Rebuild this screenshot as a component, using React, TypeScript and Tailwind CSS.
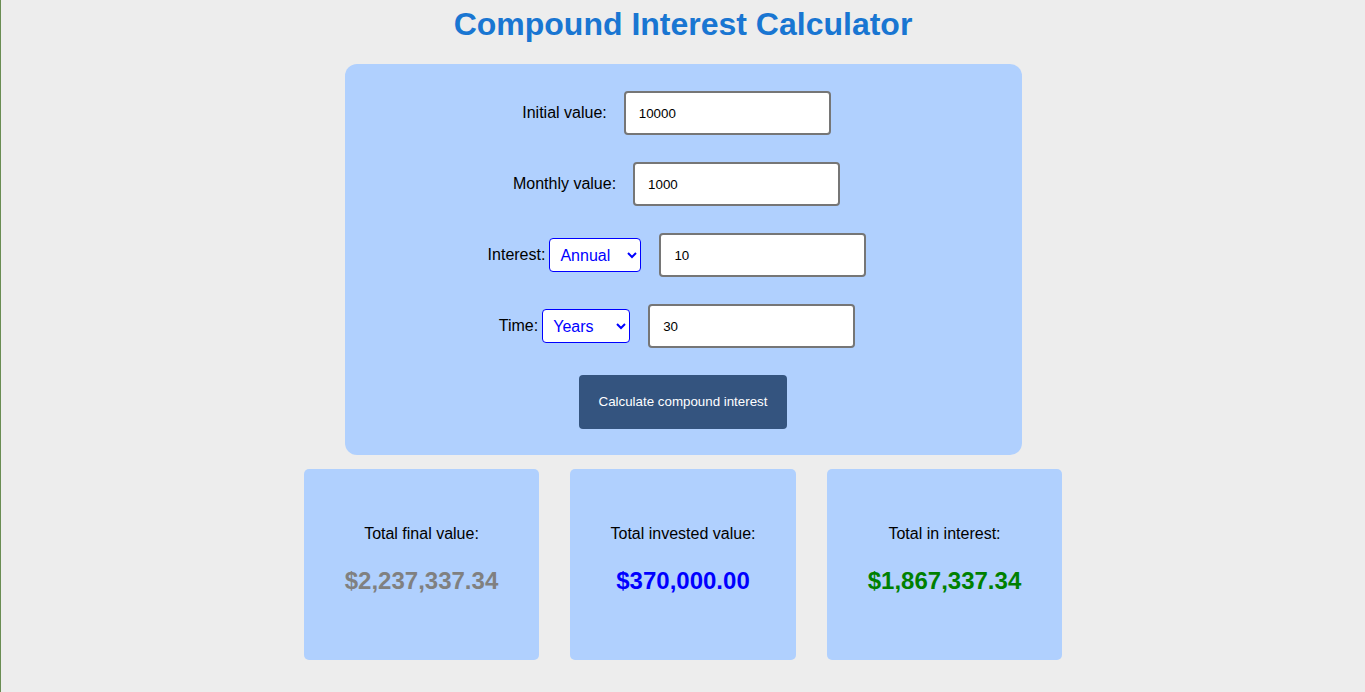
import React from "react";

const inputCls =
  "w-[207px] h-[44px] border-2 border-[#767676] rounded-[4px] bg-white pl-[13px] text-[13.33px] text-black outline-none";
const selectCls =
  "h-[34px] border border-[#0000ff] rounded-[4px] bg-white text-[#0000ff] text-[16px] pl-[6px] pr-[4px]";

export default function App() {
  return (
    <div
      className="min-h-screen bg-[#ededed] border-l border-[#6a8d52] flex flex-col items-center"
      style={{ fontFamily: '"Liberation Sans", Arial, sans-serif' }}
    >
      <h1 className="pt-[6px] text-[32px] leading-[37px] font-bold text-[#1976d2]">
        Compound Interest Calculator
      </h1>

      <div className="mt-[21px] w-[677px] rounded-[12px] bg-[#b0d0fe] pt-[27px] pb-[26px] flex flex-col items-center gap-[27px]">
        <div className="flex items-center pr-[13px] h-[44px]">
          <label className="text-[16px] text-black">Initial value:</label>
          <input className={inputCls + " ml-[17px]"} defaultValue="10000" />
        </div>
        <div className="flex items-center pr-[13px] h-[44px]">
          <label className="text-[16px] text-black">Monthly value:</label>
          <input className={inputCls + " ml-[17px]"} defaultValue="1000" />
        </div>
        <div className="flex items-center pr-[12px] h-[44px]">
          <label className="text-[16px] text-black">Interest:</label>
          <select className={selectCls + " ml-[4px] w-[92px]"} defaultValue="annual">
            <option value="annual">Annual</option>
            <option value="monthly">Monthly</option>
          </select>
          <input className={inputCls + " ml-[18px]"} defaultValue="10" />
        </div>
        <div className="flex items-center pr-[12px] h-[44px]">
          <label className="text-[16px] text-black">Time:</label>
          <select className={selectCls + " ml-[4px] w-[88px]"} defaultValue="years">
            <option value="years">Years</option>
            <option value="months">Months</option>
          </select>
          <input className={inputCls + " ml-[18px]"} defaultValue="30" />
        </div>
        <button className="w-[208px] h-[54px] rounded-[4px] bg-[#34547f] text-white text-[13.33px]">
          Calculate compound interest
        </button>
      </div>

      <div className="mt-[14px] flex justify-center gap-[31px]">
        <div className="w-[235px] h-[191px] rounded-[5px] bg-[#b0d0fe] flex flex-col items-center pt-[56px]">
          <p className="text-[16px] leading-[18px] text-black">Total final value:</p>
          <p className="mt-[24px] text-[24px] leading-[28px] font-bold text-[#808080]">$2,237,337.34</p>
        </div>
        <div className="w-[226px] h-[191px] rounded-[5px] bg-[#b0d0fe] flex flex-col items-center pt-[56px]">
          <p className="text-[16px] leading-[18px] text-black">Total invested value:</p>
          <p className="mt-[24px] text-[24px] leading-[28px] font-bold text-[#0000ff]">$370,000.00</p>
        </div>
        <div className="w-[235px] h-[191px] rounded-[5px] bg-[#b0d0fe] flex flex-col items-center pt-[56px]">
          <p className="text-[16px] leading-[18px] text-black">Total in interest:</p>
          <p className="mt-[24px] text-[24px] leading-[28px] font-bold text-[#008000]">$1,867,337.34</p>
        </div>
      </div>
    </div>
  );
}
